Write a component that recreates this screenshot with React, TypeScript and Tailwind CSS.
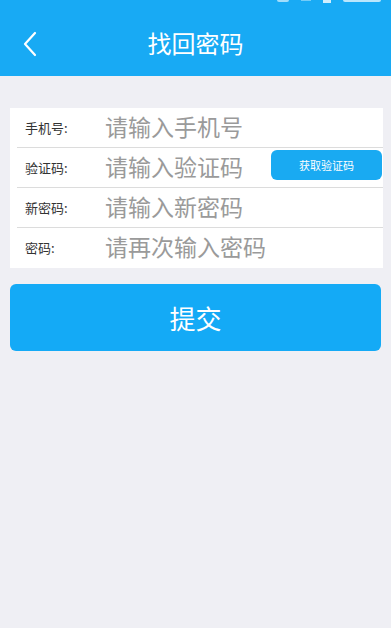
export default function App() {
  const font = { fontFamily: '"Noto Sans CJK SC", "Noto Sans", sans-serif' };
  const rows = [
    { label: "手机号:", ph: "请输入手机号" },
    { label: "验证码:", ph: "请输入验证码", code: true },
    { label: "新密码:", ph: "请输入新密码" },
    { label: "密码:", ph: "请再次输入密码" },
  ];
  return (
    <div className="w-[391px] h-[628px] bg-[#efeff4] flex flex-col overflow-hidden" style={font}>
      <div className="relative h-[76px] bg-[#18aaf4] flex items-center justify-center shrink-0">
        <div className="absolute top-0 right-[10px] flex items-start gap-[12px]">
          <div className="w-[12px] h-[2px] bg-white/60 rounded-b" />
          <div className="w-[10px] h-[1px] bg-white/40" />
          <div className="w-[8px] h-[3px] bg-white/80" />
          <div className="w-[38px] h-[2px] bg-white/70 rounded-b" />
        </div>
        <svg className="absolute left-[20px] top-[30px]" width="20" height="28" viewBox="0 0 20 28">
          <path d="M15 3 L5 14 L15 25" fill="none" stroke="white" strokeWidth="2.2" strokeLinecap="round" strokeLinejoin="round" />
        </svg>
        <span className="text-white text-[24px] mt-[10px] leading-none">找回密码</span>
      </div>
      <div className="mt-[32px] mx-[10px] bg-white flex flex-col w-[373px]">
        {rows.map((r, i) => (
          <div key={i} className={`h-[40px] ml-[7px] flex items-center ${i < 3 ? "border-b border-[#dcdcdc]" : ""}`}>
            <span className="w-[88px] pl-[8px] text-[13px] text-[#333]">{r.label}</span>
            <span className="text-[23px] text-[#9a9a9a] flex-1 leading-none mb-[3px]">{r.ph}</span>
            {r.code && (
              <div className="w-[111px] h-[30px] mr-[1px] mb-[5px] rounded-[6px] bg-[#19aaf2] flex items-center justify-center text-white text-[11px]">
                获取验证码
              </div>
            )}
          </div>
        ))}
      </div>
      <div className="mt-[16px] mx-[10px] h-[67px] rounded-[6px] bg-[#14aaf6] flex items-center justify-center text-white text-[26px]">
        提交
      </div>
    </div>
  );
}
